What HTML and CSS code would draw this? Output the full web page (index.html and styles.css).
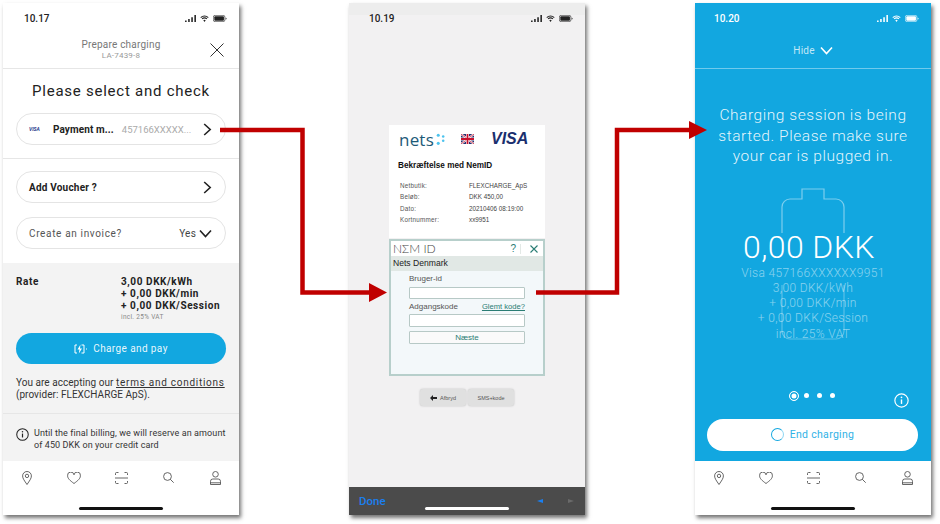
FILE: index.html
```html
<!DOCTYPE html>
<html lang="en">
<head>
  <meta charset="UTF-8" />
  <meta name="viewport" content="width=device-width, initial-scale=1.0" />
  <title>Charging flow</title>
  <link rel="stylesheet" href="styles.css">
</head>

<body>
  <svg class="defs" width="0" height="0">
    <symbol id="i-signal" viewBox="0 0 14 9"><path d="M0 9V7h2v2zM4 9V5h2v4zM8 9V3h2v6zM12 9V0h2v9z" fill="currentColor"/></symbol>
    <symbol id="i-wifi" viewBox="0 0 12 9"><path d="M1 3.2a7 7 0 0 1 10 0M2.8 5a4.500 4.500 0 0 1 6.400 0" fill="none" stroke="currentColor" stroke-width="1.400"/><path d="M6 9 4.400 6.900a2.500 2.500 0 0 1 3.200 0z" fill="currentColor"/></symbol>
    <symbol id="i-batt" viewBox="0 0 16 8"><rect x=".4" y=".4" width="13.200" height="7.200" rx="2" fill="none" stroke="currentColor" stroke-width=".7"/><rect x="1.500" y="1.500" width="11" height="5" rx="1" fill="currentColor"/><path d="M14.500 3v2a1 1 0 0 0 1-1 1 1 0 0 0-1-1z" fill="currentColor"/></symbol>
    <symbol id="i-pin" viewBox="0 0 10 14"><path d="M5 13.500C2.500 9.800.6 7.500.6 4.900a4.400 4.400 0 0 1 8.800 0C9.400 7.500 7.500 9.800 5 13.500z" fill="none" stroke="currentColor" stroke-width=".9"/><circle cx="5" cy="4.900" r="1.700" fill="none" stroke="currentColor" stroke-width=".9"/></symbol>
    <symbol id="i-heart" viewBox="0 0 14 12"><path d="M7 11.500C3 8.500.6 6.500.6 3.800a3.200 3.200 0 0 1 6.400-1 3.200 3.200 0 0 1 6.400 1c0 2.700-2.400 4.700-6.400 7.700z" fill="none" stroke="currentColor" stroke-width=".9"/></symbol>
    <symbol id="i-scan" viewBox="0 0 13 12"><path d="M.5 3V1.500a1 1 0 0 1 1-1H3.500M9.500.500h2a1 1 0 0 1 1 1V3M.5 9v1.500a1 1 0 0 0 1 1H3.500M9.500 11.500h2a1 1 0 0 0 1-1V9M0 6h13" fill="none" stroke="currentColor" stroke-width=".9"/></symbol>
    <symbol id="i-search" viewBox="0 0 11 11"><circle cx="4.500" cy="4.500" r="3.900" fill="none" stroke="currentColor" stroke-width=".9"/><path d="m7.300 7.300 3.400 3.400" stroke="currentColor" stroke-width=".9"/></symbol>
    <symbol id="i-user" viewBox="0 0 11 14"><circle cx="5.500" cy="3.300" r="2.800" fill="none" stroke="currentColor" stroke-width=".9"/><path d="M2.800 8h5.400a2.300 2.300 0 0 1 2.300 2.300v3.200H.5v-3.200A2.300 2.300 0 0 1 2.800 8zM.5 11.800h10" fill="none" stroke="currentColor" stroke-width=".9"/></symbol>
    <symbol id="i-right" viewBox="0 0 9 13"><path d="m1.200 1 6 5.500-6 5.500" fill="none" stroke="currentColor" stroke-width="1.600"/></symbol>
    <symbol id="i-down" viewBox="0 0 13 9"><path d="m1 1.500 5.500 6 5.500-6" fill="none" stroke="currentColor" stroke-width="1.600"/></symbol>
    <symbol id="i-info" viewBox="0 0 14 14"><circle cx="7" cy="7" r="6.200" fill="none" stroke="currentColor" stroke-width="1.100"/><path d="M7 6v4.200" stroke="currentColor" stroke-width="1.300"/><circle cx="7" cy="4" r=".8" fill="currentColor"/></symbol>
  </svg>

  <div class="screens">
    <!-- vorbereiten -->
    <section class="phone">
      <div class="status dark">
        <span>10.17</span>
        <span class="status-icons">
          <svg class="ic-signal"><use href="#i-signal"/></svg><svg class="ic-wifi"><use href="#i-wifi"/></svg><svg class="ic-batt"><use href="#i-batt"/></svg>
        </span>
      </div>
      <header class="prep-head">
        <div class="prep-title">Prepare charging</div>
        <div class="prep-sub">LA-7439-8</div>
        <svg class="close" viewBox="0 0 14 14"><path d="m.5.500 13 13M13.500.500l-13 13" stroke="#333" fill="none"/></svg>
      </header>
      <div class="select-box">
        <h1>Please select and check</h1>
        <div class="pill">
          <span class="mini-visa">VISA</span>
          <b class="pay-label">Payment m...</b>
          <span class="pay-num">457166XXXXX...</span>
          <svg class="chev"><use href="#i-right"/></svg>
        </div>
      </div>
      <div class="options">
        <div class="pill"><b>Add Voucher ?</b><svg class="chev"><use href="#i-right"/></svg></div>
        <div class="pill"><span class="inv">Create an invoice?</span><span class="yes">Yes<svg class="chev-down"><use href="#i-down"/></svg></span></div>
      </div>
      <div class="grey">
        <div class="rate">
          <b class="rate-name">Rate</b>
          <div class="rate-vals">
            <b>3,00 DKK/kWh</b>
            <b>+ 0,00 DKK/min</b>
            <b>+ 0,00 DKK/Session</b>
            <small>incl. 25% VAT</small>
          </div>
        </div>
        <button class="pay-btn">
          <svg class="bolt" viewBox="0 0 13 10"><path d="M3 1H1v8h2M7.500 1h2.500v8H7.500M12 5h1" fill="none" stroke="#fff"/><path d="M6.500.500 3.500 5.500h2L4.800 9.500 8 4.500H6z" fill="#fff"/></svg>
          Charge and pay
        </button>
        <p class="terms">You are accepting our <u>terms and conditions</u><br>(provider: FLEXCHARGE ApS).</p>
        <div class="notice">
          <svg class="ic-info"><use href="#i-info"/></svg>
          <p>Until the final billing, we will reserve an amount of 450 DKK on your credit card</p>
        </div>
      </div>
      <nav class="tabs">
        <svg class="t-pin"><use href="#i-pin"/></svg><svg class="t-heart"><use href="#i-heart"/></svg><svg class="t-scan"><use href="#i-scan"/></svg><svg class="t-search"><use href="#i-search"/></svg><svg class="t-user"><use href="#i-user"/></svg>
        <i class="home"></i>
      </nav>
    </section>

    <!-- NemID -->
    <section class="phone phone-nets">
      <div class="status dark status-nets">
        <span>10.19</span>
        <span class="status-icons">
          <svg class="ic-signal"><use href="#i-signal"/></svg><svg class="ic-wifi"><use href="#i-wifi"/></svg><svg class="ic-batt"><use href="#i-batt"/></svg>
        </span>
      </div>
      <div class="nets-main">
        <div class="nets-card">
          <div class="nets-logos">
            <span class="nets-logo">nets<svg class="nets-dots" viewBox="0 0 10 13"><circle cx="2.500" cy="1.800" r="1.700" fill="#4cc3ee"/><circle cx="8" cy="3.200" r="1.400" fill="#4cc3ee"/><circle cx="8" cy="8" r="1.400" fill="#4cc3ee"/><circle cx="2.500" cy="10.800" r="1.700" fill="#4cc3ee"/></svg></span>
            <svg class="flag" viewBox="0 0 13 10"><rect width="13" height="10" fill="#27306f"/><path d="M0 0l13 10M13 0L0 10" stroke="#fff" stroke-width="2"/><path d="M0 0l13 10M13 0L0 10" stroke="#c8102e" stroke-width=".8"/><path d="M6.500 0v10M0 5h13" stroke="#fff" stroke-width="3"/><path d="M6.500 0v10M0 5h13" stroke="#c8102e" stroke-width="1.800"/></svg>
            <span class="visa">VISA</span>
          </div>
          <h2>Bekræftelse med NemID</h2>
          <dl class="order">
            <dt>Netbutik:</dt><dd>FLEXCHARGE_ApS</dd>
            <dt>Beløb:</dt><dd>DKK 450,00</dd>
            <dt>Dato:</dt><dd>20210406 08:19:00</dd>
            <dt>Kortnummer:</dt><dd>xx9951</dd>
          </dl>
        </div>
        <div class="nemid">
          <div class="nemid-top">
            <span class="nemid-logo">NΣM ID</span>
            <span class="nemid-help">?</span>
            <svg class="nemid-x" viewBox="0 0 8 8"><path d="m.5.500 7 7M7.500.500l-7 7" stroke="#2a7d74" stroke-width="1.100" fill="none"/></svg>
          </div>
          <div class="nemid-bar">Nets Denmark</div>
          <div class="nemid-form">
            <label class="lbl">Bruger-id</label>
            <div class="inp"></div>
            <div class="lbl-row"><label class="lbl">Adgangskode</label><a class="forgot">Glemt kode?</a></div>
            <div class="inp inp-pass"></div>
            <div class="next">Næste</div>
          </div>
        </div>
        <div class="nets-btns">
          <span class="nets-btn"><svg class="back-arr" viewBox="0 0 7 6"><path d="M0 3l3-3v2h4v2H3v2z" fill="#222"/></svg>Afbryd</span>
          <span class="nets-btn">SMS+kode</span>
        </div>
      </div>
      <div class="kbd-bar">
        <span class="done">Done</span>
        <span class="kbd-arrows"><i class="tri-left"></i><i class="tri-right"></i></span>
        <i class="home home-light"></i>
      </div>
    </section>

    <!-- Ladevorgang -->
    <section class="phone phone-blue">
      <div class="status">
        <span>10.20</span>
        <span class="status-icons">
          <svg class="ic-signal"><use href="#i-signal"/></svg><svg class="ic-wifi"><use href="#i-wifi"/></svg><svg class="ic-batt"><use href="#i-batt"/></svg>
        </span>
      </div>
      <div class="hide-row">Hide<svg class="hide-chev"><use href="#i-down"/></svg></div>
      <div class="session">
        <svg class="battery" viewBox="0 0 64 152"><path d="M1 45V19a8 8 0 0 1 8-8h12V1h22v10h12a8 8 0 0 1 8 8v26" fill="none" stroke="#fff" stroke-opacity=".45" stroke-width="1.200"/><path d="M1 97v46a8 8 0 0 0 8 8h46a8 8 0 0 0 8-8V97" fill="none" stroke="#fff" stroke-opacity=".3" stroke-width="1.200"/></svg>
        <p class="session-msg">Charging session is being started. Please make sure your car is plugged in.</p>
        <div class="amount">0,00 DKK</div>
        <div class="session-info">
          <div>Visa 457166XXXXXX9951</div>
          <div>3,00 DKK/kWh</div>
          <div>+ 0,00 DKK/min</div>
          <div>+ 0,00 DKK/Session</div>
          <div>incl. 25% VAT</div>
        </div>
        <div class="pager">
          <i class="dot-on"></i><i class="dot"></i><i class="dot"></i><i class="dot"></i>
          <svg class="pager-info"><use href="#i-info"/></svg>
        </div>
        <button class="end-btn"><i class="spinner"></i>End charging</button>
      </div>
      <nav class="tabs">
        <svg class="t-pin"><use href="#i-pin"/></svg><svg class="t-heart"><use href="#i-heart"/></svg><svg class="t-scan"><use href="#i-scan"/></svg><svg class="t-search"><use href="#i-search"/></svg><svg class="t-user"><use href="#i-user"/></svg>
        <i class="home"></i>
      </nav>
    </section>
  </div>

  <!-- rote Pfeile liegen ueber den Screens -->
  <svg class="arrows" viewBox="0 0 940 524">
    <path d="M220 130h82.500v162.500H370M536 292.500h81V130h73" fill="none" stroke="#c00000" stroke-width="4.500"/>
    <path d="M369 283l18 9.500-18 9.500zM689 121l18 9-18 9z" fill="#c00000"/>
  </svg>
</body>
</html>
```

FILE: styles.css
```css
* {
  box-sizing: border-box;
}

body {
  margin: 0;
  width: 940px;
  height: 524px;
  overflow: hidden;
  background: #fff;
  font-family: "Roboto", "Liberation Sans", sans-serif;
  color: #222;
}

.defs {
  display: block;
  height: 0;
}

.screens {
  display: flex;
  gap: 110px;
  padding: 3px 0 0 3px;
}

.phone {
  display: flex;
  flex-direction: column;
  width: 236px;
  height: 512px;
  background: #fff;
  box-shadow: 2px 3px 4px rgba(0, 0, 0, 0.55);
}

/* status bar */
.status {
  display: flex;
  flex: none;
  align-items: center;
  justify-content: space-between;
  height: 28px;
  padding: 2px 12px 0 21px;
  font-size: 10px;
  font-weight: 500;
  color: #fff;
}

.status.dark {
  color: #222;
}

.status-icons {
  display: flex;
  align-items: center;
  gap: 4px;
}

.ic-signal {
  width: 11px;
  height: 7px;
}

.ic-wifi {
  width: 9px;
  height: 7px;
}

.ic-batt {
  width: 14px;
  height: 7px;
}

/* screen 1 */
.prep-head {
  position: relative;
  flex: none;
  height: 38px;
  border-bottom: 1px solid #e6e6e6;
  padding-top: 8px;
  text-align: center;
}

.prep-title {
  font-size: 10px;
  line-height: 12px;
  letter-spacing: 0.2px;
  color: #777;
}

.prep-sub {
  font-size: 8px;
  line-height: 10px;
  letter-spacing: 0.2px;
  color: #999;
}

.close {
  position: absolute;
  top: 12px;
  right: 15px;
  width: 14px;
  height: 14px;
}

.select-box {
  flex: none;
  height: 90px;
  padding: 0 13px;
  border-bottom: 1px solid #e6e6e6;
}

.select-box h1 {
  margin: 0;
  height: 44px;
  font-size: 15px;
  font-weight: 400;
  line-height: 44px;
  letter-spacing: 0.75px;
  text-align: center;
  color: #222;
}

.pill {
  display: flex;
  align-items: center;
  justify-content: space-between;
  height: 32px;
  padding: 0 13px 0 12px;
  border: 1px solid #e4e4e4;
  border-radius: 16px;
  font-size: 10px;
  letter-spacing: 0.2px;
}

.mini-visa {
  width: 12px;
  margin-right: 12px;
  font-size: 5px;
  font-style: italic;
  font-weight: 700;
  color: #2b3a8c;
  letter-spacing: 0;
}

.pay-label {
  flex: none;
  font-weight: 700;
  letter-spacing: 0.1px;
}

.pay-num {
  flex: 1;
  margin-left: 8px;
  color: #aaa;
  white-space: nowrap;
  letter-spacing: 0;
  font-size: 9.500px;
}

.chev {
  flex: none;
  width: 9px;
  height: 13px;
  color: #222;
}

.options {
  display: flex;
  flex: none;
  flex-direction: column;
  gap: 14px;
  height: 104px;
  padding: 12px 13px 0;
}

.inv {
  color: #555;
  letter-spacing: 0.65px;
}

.yes {
  display: flex;
  align-items: center;
  gap: 3px;
  color: #444;
}

.chev-down {
  width: 13px;
  height: 9px;
  color: #222;
}

.grey {
  flex: none;
  height: 198px;
  background: #f3f3f3;
  padding: 13px 0 0;
}

.rate {
  display: flex;
  height: 57px;
  padding-left: 13px;
  font-size: 10px;
  line-height: 12px;
  letter-spacing: 0.58px;
}

.rate-name {
  width: 105px;
}

.rate-vals {
  display: flex;
  flex-direction: column;
}

.rate-vals small {
  font-size: 6.500px;
  line-height: 10px;
  letter-spacing: 0.3px;
  color: #888;
}

.pay-btn {
  display: flex;
  align-items: center;
  justify-content: center;
  gap: 6px;
  width: 210px;
  height: 31px;
  margin-left: 13px;
  border: none;
  border-radius: 16px;
  background: #12a7e0;
  color: rgba(255, 255, 255, 0.92);
  font: 400 10px "Roboto", sans-serif;
  letter-spacing: 0.4px;
}

.bolt {
  width: 13px;
  height: 10px;
}

.terms {
  margin: 13px 13px 0;
  font-size: 10px;
  line-height: 12px;
  letter-spacing: 0.04px;
  color: #333;
}

.terms u {
  letter-spacing: 0.73px;
}

.notice {
  display: flex;
  gap: 5px;
  margin-top: 12px;
  padding: 14px 9px 0 13px;
  border-top: 1px solid #e6e6e6;
}

.ic-info {
  flex: none;
  width: 13px;
  height: 13px;
  color: #222;
}

.notice p {
  margin: 0;
  font-size: 9px;
  line-height: 11.500px;
  letter-spacing: 0.1px;
  color: #333;
}

/* tab bar */
.tabs {
  position: relative;
  display: grid;
  flex: 1;
  grid-template-columns: repeat(5, 47px);
  justify-items: center;
  align-items: center;
  align-content: start;
  grid-auto-rows: 15px;
  padding: 9px 0 0 0.5px;
  background: #fff;
  color: #555;
}

.t-pin {
  width: 10px;
  height: 14px;
}

.t-heart {
  width: 14px;
  height: 12px;
}

.t-scan {
  width: 13px;
  height: 12px;
}

.t-search {
  width: 11px;
  height: 11px;
}

.t-user {
  width: 11px;
  height: 14px;
}

.home {
  position: absolute;
  left: 76px;
  bottom: 5px;
  width: 84px;
  height: 3px;
  border-radius: 2px;
  background: #111;
}

/* screen 2 */
.phone-nets {
  background: #f2f1f2;
}

.status-nets {
  padding-left: 20px;
  background: linear-gradient(#ededed 12px, transparent 12px);
}

.nets-main {
  flex: 1;
  padding: 94px 40px 0;
}

.nets-card {
  height: 113px;
  margin-bottom: 1px;
  background: #fff;
  padding: 0 0 0 10px;
}

.nets-logos {
  display: flex;
  align-items: center;
  height: 28px;
}

.nets-logo {
  display: flex;
  align-items: center;
  width: 62px;
  font-family: "Open Sans", sans-serif;
  font-size: 17px;
  letter-spacing: 0.2px;
  color: #1d5a78;
}

.nets-dots {
  width: 9px;
  height: 13px;
  margin-left: 2px;
}

.flag {
  width: 13px;
  height: 10px;
  margin-right: 17px;
}

.visa {
  font-family: "Liberation Sans", sans-serif;
  font-size: 16px;
  font-style: italic;
  font-weight: 700;
  color: #1a2f6e;
}

.nets-card h2 {
  margin: 7px 0 0 -1px;
  font-family: "Liberation Sans", sans-serif;
  font-size: 8.200px;
  line-height: 12px;
  color: #111;
}

.order {
  display: grid;
  grid-template-columns: 69px 1fr;
  grid-auto-rows: 11.300px;
  margin: 8px 0 0 1px;
  font-family: "Liberation Sans", sans-serif;
  font-size: 6.300px;
  line-height: 11.300px;
  color: #444;
}

.order dt,
.order dd {
  margin: 0;
}

.order dt {
  letter-spacing: 0.25px;
  color: #555;
}

.nemid {
  height: 137px;
  border: 2px solid #b7cfcb;
  background: #f3f8fa;
  font-family: "Liberation Sans", sans-serif;
}

.nemid-top {
  display: flex;
  align-items: center;
  height: 15px;
  padding: 0 5px 0 2px;
  background: #fff;
}

.nemid-logo {
  flex: 1;
  font-family: "Lato", sans-serif;
  font-size: 12px;
  font-weight: 300;
  line-height: 15px;
  color: #444;
}

.nemid-help {
  margin-right: 9px;
  padding-right: 4px;
  border-right: 1px solid #e3e9e6;
  font-size: 10px;
  line-height: 10px;
  color: #2a7d74;
}

.nemid-x {
  width: 8px;
  height: 8px;
}

.nemid-bar {
  height: 15px;
  padding-left: 2px;
  background: #e1e8e5;
  font-size: 8.600px;
  line-height: 15px;
  color: #222;
}

.nemid-form {
  padding: 2px 18px 0;
  font-size: 8px;
  color: #555;
}

.lbl {
  display: block;
  line-height: 12px;
}

.inp {
  height: 12px;
  margin-top: 2px;
  border: 1px solid #b7c9c6;
  border-radius: 1px;
  background: #fff;
}

.inp-pass {
  height: 13px;
  margin-top: 1px;
}

.lbl-row {
  display: flex;
  justify-content: space-between;
  margin-top: 2px;
}

.forgot {
  font-size: 7.600px;
  line-height: 12px;
  color: #2a7d74;
  text-decoration: underline;
}

.next {
  height: 13px;
  margin-top: 4px;
  border: 1px solid #b7c9c6;
  border-radius: 1px;
  background: #fafafa;
  line-height: 11px;
  text-align: center;
  color: #2a7d74;
}

.nets-btns {
  display: flex;
  justify-content: center;
  gap: 2px;
  margin-top: 13px;
}

.nets-btn {
  display: flex;
  align-items: center;
  justify-content: center;
  gap: 3px;
  width: 46px;
  height: 17px;
  border-radius: 3px;
  background: #e0e0e0;
  box-shadow: 0 0 2px #bbb;
  font-family: "Liberation Sans", sans-serif;
  font-size: 5.500px;
  color: #555;
}

.back-arr {
  width: 7px;
  height: 6px;
}

.kbd-bar {
  position: relative;
  display: flex;
  flex: none;
  align-items: center;
  justify-content: space-between;
  height: 28px;
  padding: 0 11px 0 10px;
  background: #4b4b4b;
}

.done {
  font-size: 11.500px;
  font-weight: 500;
  color: #1a7ff0;
}

.kbd-arrows {
  display: flex;
  gap: 25px;
}

.tri-left,
.tri-right {
  width: 0;
  height: 0;
  border-top: 2.500px solid transparent;
  border-bottom: 2.500px solid transparent;
}

.tri-left {
  border-right: 6px solid #1a7ff0;
}

.tri-right {
  border-left: 6px solid #6a6a6a;
}

.home-light {
  background: #fff;
}

/* screen 3 */
.phone-blue {
  background: #12a7e0;
}

.phone-blue .status {
  padding-left: 19px;
}

.hide-row {
  display: flex;
  flex: none;
  align-items: center;
  justify-content: center;
  gap: 5px;
  height: 38px;
  padding-top: 1px;
  border-bottom: 1px solid rgba(255, 255, 255, 0.4);
  font-size: 10px;
  letter-spacing: 0.2px;
  color: rgba(255, 255, 255, 0.75);
}

.hide-chev {
  width: 13px;
  height: 9px;
  color: #fff;
}

.session {
  position: relative;
  flex: none;
  height: 392px;
  padding-top: 36px;
  text-align: center;
}

.battery {
  position: absolute;
  top: 119px;
  left: 86px;
  width: 64px;
  height: 152px;
}

.session-msg {
  position: relative;
  width: 200px;
  margin: 0 auto;
  font-size: 15.500px;
  font-weight: 300;
  line-height: 20.500px;
  letter-spacing: 0.55px;
  color: rgba(255, 255, 255, 0.9);
}

.amount {
  position: relative;
  margin-top: 62px;
  padding-right: 8px;
  font-size: 32px;
  font-weight: 300;
  line-height: 36px;
  letter-spacing: 0.4px;
  color: #fff;
}

.session-info {
  position: relative;
  margin-top: 1px;
  font-size: 12px;
  font-weight: 300;
  line-height: 15.300px;
  letter-spacing: 0.35px;
  color: rgba(255, 255, 255, 0.5);
}

.pager {
  position: relative;
  display: flex;
  align-items: center;
  justify-content: center;
  gap: 8px;
  height: 12px;
  margin-top: 48px;
  padding-right: 3px;
}

.dot-on {
  width: 10px;
  height: 10px;
  margin-right: -3px;
  border: 1px solid #fff;
  border-radius: 50%;
  background: #fff;
  box-shadow: inset 0 0 0 1.500px #12a7e0;
}

.dot {
  width: 5px;
  height: 5px;
  border-radius: 50%;
  background: #fff;
}

.pager-info {
  position: absolute;
  top: 3px;
  right: 22px;
  width: 15px;
  height: 15px;
  color: #fff;
}

.end-btn {
  display: flex;
  align-items: center;
  justify-content: center;
  gap: 6px;
  width: 211px;
  height: 32px;
  margin: 17px 0 0 12px;
  border: none;
  border-radius: 16px;
  background: #fff;
  color: #30b2e6;
  font: 400 10.500px "Roboto", sans-serif;
  letter-spacing: 0.3px;
}

.spinner {
  width: 13px;
  height: 13px;
  border: 1.200px solid #12a7e0;
  border-right-color: #8fd6f2;
  border-radius: 50%;
}

.arrows {
  position: absolute;
  top: 0;
  left: 0;
  width: 940px;
  height: 524px;
}
```
